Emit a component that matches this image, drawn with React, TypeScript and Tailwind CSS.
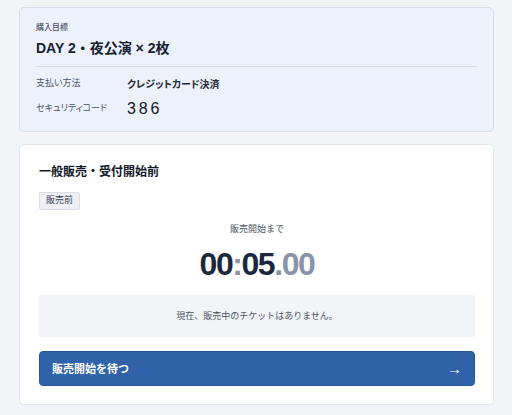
import React from 'react';

const font = { fontFamily: '"Liberation Sans", "Noto Sans CJK JP", sans-serif' };

export default function App() {
  return (
    <div className="min-h-screen w-[512px] bg-[#f3f4f8] pl-[19px] pr-[18px] pt-[7px] pb-[10px]" style={font}>
      {/* purchase summary */}
      <div className="rounded-[5px] border border-[#d6dde9] bg-[#edf2fa] px-[16px] pt-[14px] pb-[12px]">
        <div className="text-[8px] leading-[12px] font-medium text-[#4b5468] [font-feature-settings:'palt']">購入目標</div>
        <div className="mt-[4px] text-[14px] leading-[20px] font-bold text-[#172033]">DAY 2・夜公演 × 2枚</div>
        <div className="mt-[8px] h-px bg-[#d3dae6]" />
        <div className="mt-[9px] flex items-center h-[16px] [font-feature-settings:'palt']">
          <div className="w-[91px] text-[9px] text-[#4b5468]">支払い方法</div>
          <div className="text-[10px] font-bold text-[#1f2937]">クレジットカード決済</div>
        </div>
        <div className="mt-[7px] flex items-center h-[20px] [font-feature-settings:'palt']">
          <div className="w-[91px] text-[9px] text-[#4b5468]">セキュリティコード</div>
          <div className="text-[16px] tracking-[0.18em] font-medium text-[#111827]">386</div>
        </div>
      </div>

      {/* sale status */}
      <div className="mt-[12px] rounded-[5px] border border-[#e1e5ee] bg-white pl-[19px] pr-[18px] pt-[18px] pb-[18px]">
        <div className="text-[12px] leading-[18px] font-bold text-[#111827]">一般販売・受付開始前</div>
        <div className="mt-[11px] inline-flex h-[18px] items-center rounded-[2px] border border-[#d9dde6] bg-[#eef0f5] px-[6px] text-[9px] text-[#374151]">
          販売前
        </div>
        <div className="mt-[12px] text-center text-[9px] leading-[14px] text-[#4b5563]">販売開始まで</div>
        <div className="mt-[10px] text-center text-[32px] leading-[36px] font-black tracking-[-0.045em] text-[#1c2840]">
          00<span className="text-[#8a93a8]">:</span>05<span className="text-[#8a93a8]">.00</span>
        </div>
        <div className="mt-[13px] flex h-[42px] items-center justify-center rounded-[2px] bg-[#f3f4f8] text-[9px] text-[#4b5563]">
          現在、販売中のチケットはありません。
        </div>
        <button className="mt-[14px] flex h-[35px] w-full items-center justify-between rounded-[4px] border border-[#27559a] bg-[#2f62a8] pl-[12px] pr-[12px] text-white">
          <span className="text-[11px] font-bold">販売開始を待つ</span>
          <span className="text-[15px] leading-none">→</span>
        </button>
      </div>
    </div>
  );
}
